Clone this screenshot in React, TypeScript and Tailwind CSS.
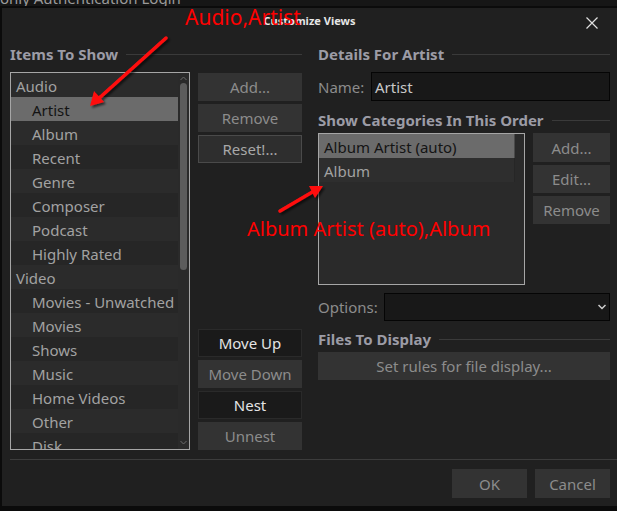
import React from "react";

const font = { fontFamily: '"Noto Sans", "Open Sans", sans-serif' };

function Header({ text }: { text: string }) {
  return (
    <div className="flex items-center h-[18px] gap-2">
      <span className="text-[15px] font-bold text-[#9c9ca6] leading-none whitespace-nowrap">{text}</span>
      <div className="flex-1 h-px bg-[#3a3a3a]" />
    </div>
  );
}

function Btn({ label, variant = "normal", className = "" }: { label: string; variant?: "normal" | "dark" | "outlined"; className?: string }) {
  const v =
    variant === "dark"
      ? "bg-[#1a1a1a] border border-[#2a2a2a] text-[#e4e4e4]"
      : variant === "outlined"
      ? "bg-[#2e2e2e] border border-[#4a4a4a] text-[#a8a8a8]"
      : "bg-[#333333] text-[#8c8c8c]";
  return (
    <div className={`h-[28px] flex items-center justify-center text-[15px] pt-[1px] ${v} ${className}`}>{label}</div>
  );
}

const items: { t: string; indent: boolean; sel?: boolean }[] = [
  { t: "Audio", indent: false },
  { t: "Artist", indent: true, sel: true },
  { t: "Album", indent: true },
  { t: "Recent", indent: true },
  { t: "Genre", indent: true },
  { t: "Composer", indent: true },
  { t: "Podcast", indent: true },
  { t: "Highly Rated", indent: true },
  { t: "Video", indent: false },
  { t: "Movies - Unwatched", indent: true },
  { t: "Movies", indent: true },
  { t: "Shows", indent: true },
  { t: "Music", indent: true },
  { t: "Home Videos", indent: true },
  { t: "Other", indent: true },
  { t: "Disk", indent: true },
];

export default function App() {
  return (
    <div className="relative w-[617px] h-[511px] bg-[#0b0b0b] overflow-hidden" style={font}>
      {/* top strip */}
      <div className="h-[6px] bg-[#161616] overflow-hidden">
        <div className="text-[15px] leading-none text-[#9a9a9a] -mt-[9px] whitespace-nowrap">oniy Authentication Login</div>
      </div>
      <div className="h-[2px]" />
      {/* dialog */}
      <div className="ml-[2px] h-[498px] bg-[#202020] flex flex-col">
        {/* title */}
        <div className="relative h-[29px] flex items-center justify-center">
          <span className="text-[11px] font-bold text-[#e6e6e6] mt-[-2px]">Customize Views</span>
          <svg className="absolute right-[19px] top-[9px]" width="12" height="12" viewBox="0 0 12 12">
            <path d="M0.5 0.5 L11.5 11.5 M11.5 0.5 L0.5 11.5" stroke="#e0e0e0" strokeWidth="1.2" />
          </svg>
        </div>
        <div className="flex px-[8px] pr-[7px] gap-[16px] pt-[8px]">
          {/* left column */}
          <div className="w-[292px] flex flex-col">
            <Header text="Items To Show" />
            <div className="flex gap-[8px] mt-[9px]">
              <div className="w-[180px] h-[378px] border border-[#a6a6a6] bg-[#262626] flex overflow-hidden">
                <div className="flex-1 flex flex-col">
                  {items.map((it, i) => (
                    <div
                      key={it.t}
                      className={`h-[24px] shrink-0 flex items-center pt-[2px] text-[15px] ${it.indent ? "pl-[21px]" : "pl-[5px]"} ${
                        it.sel ? "bg-[#6b6b6b] text-[#141414]" : i % 2 === 0 ? "bg-[#2b2b2b] text-[#a2a2a2]" : "bg-[#262626] text-[#a2a2a2]"
                      }`}
                    >
                      {it.t}
                    </div>
                  ))}
                </div>
                <div className="w-[11px] bg-[#2a2a2a] flex flex-col items-center relative">
                  <svg className="mt-[3px]" width="7" height="5" viewBox="0 0 7 5">
                    <path d="M0.5 4 L3.5 1 L6.5 4" stroke="#6a6a6a" fill="none" />
                  </svg>
                  <div className="mt-[2px] w-[7px] h-[187px] rounded-full bg-[#5c5c5c]" />
                  <svg className="absolute bottom-[4px]" width="7" height="5" viewBox="0 0 7 5">
                    <path d="M0.5 1 L3.5 4 L6.5 1" stroke="#6a6a6a" fill="none" />
                  </svg>
                </div>
              </div>
              <div className="w-[104px] flex flex-col">
                <div className="flex flex-col gap-[3px] mt-[1px]">
                  <Btn label="Add..." />
                  <Btn label="Remove" />
                  <Btn label="Reset!..." variant="outlined" />
                </div>
                <div className="flex-1" />
                <div className="flex flex-col gap-[3px]">
                  <Btn label="Move Up" variant="dark" />
                  <Btn label="Move Down" />
                  <Btn label="Nest" variant="dark" />
                  <Btn label="Unnest" />
                </div>
              </div>
            </div>
          </div>
          {/* right column */}
          <div className="flex-1 flex flex-col">
            <Header text="Details For Artist" />
            <div className="flex items-center mt-[9px] h-[29px]">
              <span className="text-[15px] text-[#8c8c8c] w-[53px] pt-[1px]">Name:</span>
              <div className="flex-1 h-[29px] bg-[#181818] border border-[#050505] flex items-center pl-[3px] pt-[1px] text-[15px] text-[#c8c8c8]">
                Artist
              </div>
            </div>
            <div className="mt-[10px]">
              <Header text="Show Categories In This Order" />
            </div>
            <div className="flex gap-[8px] mt-[4px]">
              <div className="w-[207px] h-[152px] border border-[#a6a6a6] bg-[#2a2a2a] flex flex-col">
                <div className="h-[24px] flex items-center pl-[5px] pt-[2px] text-[15px] bg-[#6b6b6b] text-[#141414] border-r border-[#4a4a4a] mr-[9px]">
                  Album Artist (auto)
                </div>
                <div className="h-[24px] flex items-center pl-[5px] pt-[2px] text-[15px] bg-[#2e2e2e] text-[#a2a2a2] border-r border-[#262626] mr-[9px]">
                  Album
                </div>
              </div>
              <div className="flex-1 flex flex-col gap-[3px]">
                <Btn label="Add..." className="h-[29px]" />
                <Btn label="Edit..." />
                <Btn label="Remove" />
              </div>
            </div>
            <div className="flex items-center mt-[8px] h-[28px]">
              <span className="text-[15px] text-[#8c8c8c] w-[66px] pt-[1px]">Options:</span>
              <div className="flex-1 h-[28px] bg-[#181818] border border-[#050505] flex items-center justify-end pr-[3px]">
                <svg width="8" height="6" viewBox="0 0 8 6">
                  <path d="M0.5 1 L4 4.5 L7.5 1" stroke="#cfcfcf" strokeWidth="1.5" fill="none" />
                </svg>
              </div>
            </div>
            <div className="mt-[9px]">
              <Header text="Files To Display" />
            </div>
            <Btn label="Set rules for file display..." className="mt-[4px]" />
          </div>
        </div>
        {/* footer */}
        <div className="mt-[9px] ml-[8px] h-px bg-[#3c3c3c]" />
        <div className="flex justify-end gap-[8px] pr-[7px] mt-[9px]">
          <div className="w-[75px] h-[29px] pt-[1px] bg-[#333333] flex items-center justify-center text-[15px] text-[#8c8c8c]">OK</div>
          <div className="w-[75px] h-[29px] pt-[1px] bg-[#333333] flex items-center justify-center text-[15px] text-[#8c8c8c]">Cancel</div>
        </div>
      </div>

      {/* annotations */}
      <svg className="absolute left-0 top-0 pointer-events-none" width="617" height="511" viewBox="0 0 617 511">
        <defs>
          <filter id="sh" x="-20%" y="-20%" width="140%" height="140%">
            <feDropShadow dx="2" dy="2" stdDeviation="1.2" floodColor="#000" floodOpacity="0.6" />
          </filter>
        </defs>
        <g filter="url(#sh)" stroke="#ff1010" strokeWidth="3.5" fill="#ff1010" strokeLinecap="round">
          <line x1="166" y1="38" x2="97" y2="100" />
          <polygon points="90,106 94,91 104,102" stroke="none" />
          <line x1="280" y1="211" x2="314" y2="191" />
          <polygon points="323,186 309,186 315,198" stroke="none" />
        </g>
      </svg>
      <div className="absolute left-[185px] top-[7px] text-[21px] leading-none text-[#ff0000] whitespace-nowrap" style={font}>
        Audio,Artist
      </div>
      <div className="absolute left-[247px] top-[219px] text-[20px] leading-none text-[#ff0000] whitespace-nowrap" style={font}>
        Album Artist (auto),Album
      </div>
    </div>
  );
}
